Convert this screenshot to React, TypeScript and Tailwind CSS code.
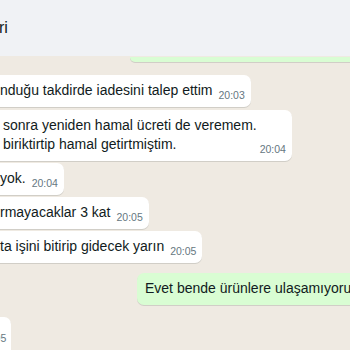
const font = "font-['Liberation_Sans','Noto_Sans',sans-serif]";

type MsgProps = {
  lines: string[];
  time: string;
  pl?: string;
  gap?: string;
};

const Time = ({ time }: { time: string }) => (
  <span className="shrink-0 text-[10.5px] leading-[15px] text-[#667781] whitespace-nowrap">
    {time}
  </span>
);

const Incoming = ({ lines, time, pl = "pl-0", gap = "gap-[6px]" }: MsgProps) => (
  <div
    className={`flex w-fit items-end rounded-r-[7px] bg-white pt-[6px] pb-[4px] pr-[6px] shadow-[0_1px_0.5px_rgba(11,20,26,0.13)] ${pl} ${gap}`}
  >
    <div className="mb-[3px] flex flex-col text-[14px] leading-[19px] text-[#111b21] whitespace-nowrap">
      {lines.map((l) => (
        <span key={l}>{l}</span>
      ))}
    </div>
    <Time time={time} />
  </div>
);

export default function App() {
  return (
    <div className={`flex h-[350px] w-[350px] flex-col overflow-hidden ${font}`}>
      <header className="flex h-[56px] shrink-0 items-center bg-[#f0f2f5]">
        <span className="-ml-[1px] text-[16px] text-[#111b21]">ri</span>
      </header>

      <div className="flex flex-1 flex-col bg-[#efeae2]">
        {/* bottom of an outgoing bubble hidden under the header */}
        <div className="ml-[130px] mt-[1px] h-[5px] rounded-bl-[7px] bg-[#d9fdd3] shadow-[0_1px_0.5px_rgba(11,20,26,0.13)]" />

        <div className="mt-[13px] flex flex-col gap-[2px]">
          <Incoming lines={["nduğu takdirde iadesini talep ettim"]} time="20:03" />
          <div className="mt-[1px]">
            <Incoming
              pl="pl-[3px]"
              gap="gap-[3px]"
              lines={["sonra yeniden hamal ücreti de veremem.", "biriktirtip hamal getirtmiştim."]}
              time="20:04"
            />
          </div>
          <Incoming lines={["yok."]} time="20:04" />
          <Incoming lines={["rmayacaklar 3 kat"]} time="20:05" />
          <Incoming lines={["ta işini bitirip gidecek yarın"]} time="20:05" />
        </div>

        <div className="ml-[137px] mt-[10px] flex items-center rounded-l-[7px] bg-[#d9fdd3] pt-[6px] pb-[7px] pl-[8px] shadow-[0_1px_0.5px_rgba(11,20,26,0.13)]">
          <span className="text-[14px] leading-[19px] text-[#111b21] whitespace-nowrap">
            Evet bende ürünlere ulaşamıyorum
          </span>
        </div>

        <div className="-ml-[20px] mt-[12px] flex h-[40px] w-fit items-start rounded-r-[7px] bg-white pt-[14px] pr-[5px] shadow-[0_1px_0.5px_rgba(11,20,26,0.13)]">
          <Time time="20:05" />
        </div>
      </div>
    </div>
  );
}
